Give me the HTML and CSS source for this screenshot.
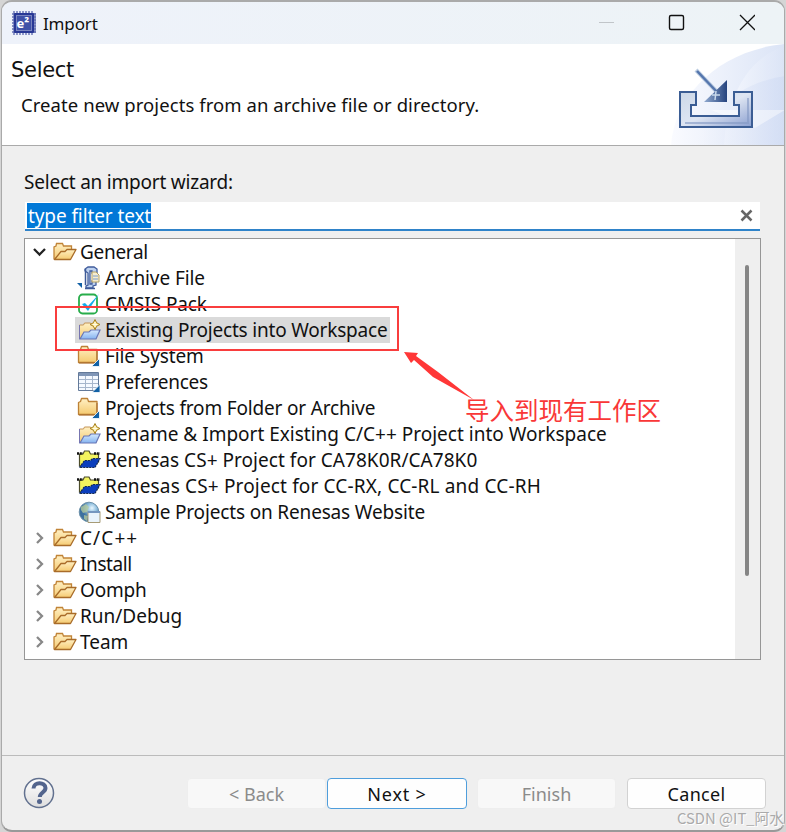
FILE: index.html
```html
<!DOCTYPE html>
<html lang="en">
<head>
<meta charset="utf-8">
<title>Import</title>
<link rel="stylesheet" href="styles.css">
</head>
<body>
<svg class="defs" width="0" height="0" aria-hidden="true">
  <defs>
    <linearGradient id="gold" x2="0" y2="1"><stop stop-color="#fff0c4"/><stop offset="1" stop-color="#f5ca70"/></linearGradient>
    <linearGradient id="sky" x2="0" y2="1"><stop stop-color="#d5e9ff"/><stop offset="1" stop-color="#85b3ef"/></linearGradient>
    <linearGradient id="sweep"><stop stop-color="#fafbff"/><stop offset="1" stop-color="#dbe4f6"/></linearGradient>
    <linearGradient id="sweep2"><stop stop-color="#f5f7fd"/><stop offset="1" stop-color="#cedaf3"/></linearGradient>
    <linearGradient id="tray" x2="1" y2="1"><stop stop-color="#ccd8e8"/><stop offset=".5" stop-color="#dee5f2"/><stop offset="1" stop-color="#8a9fd0"/></linearGradient>
    <linearGradient id="arrow"><stop stop-color="#92abd0"/><stop offset="1" stop-color="#25437e"/></linearGradient>
    <linearGradient id="help" x2="0" y2="1"><stop stop-color="#fff"/><stop offset="1" stop-color="#dedede"/></linearGradient>
    <radialGradient id="globe" cx=".65" cy=".3"><stop stop-color="#e9f7ff"/><stop offset=".5" stop-color="#8fbfdf"/><stop offset="1" stop-color="#3e719f"/></radialGradient>
    <symbol id="open" viewBox="0 0 24 20"><path d="M1 17.500V5l2-1 .5-2.500h6l1 2.500h8v5" fill="url(#gold)" stroke="#c18437" stroke-width="1.300"/><path d="M1.500 17.500 8 9.500h4l2-2h9l-5.500 10z" fill="url(#gold)" stroke="#a96c29" stroke-width="1.300" stroke-linejoin="round"/></symbol>
    <symbol id="closed" viewBox="0 0 24 24"><path d="M1.500 6.500 3.500 5.500l1-3h6l1 3h8.500v13h-18.500z" fill="url(#gold)" stroke="#bd8136" stroke-width="1.300" stroke-linejoin="round"/><path d="M2 19h18V7" fill="none" stroke="#a76b2d"/><path d="M14.500 22.500h8v-8z" fill="#1261a5" stroke="#fff" stroke-width=".8"/></symbol>
    <symbol id="project" viewBox="0 0 24 22"><path d="M2.500 20V6h4l1-2h6l1 2h4v6" fill="url(#gold)" stroke="#c49456"/><path d="M2.500 20V6" stroke="#7775b0"/><path d="m3 20 4-7h5l2-2h9l-4 9z" fill="url(#sky)" stroke="#6876b6" stroke-width="1.200"/><path d="m18 .5 1.700 3.300L23 5.500l-3.300 1.700L18 10.500l-1.700-3.300L13 5.500l3.300-1.700z" fill="#f7df86" stroke="#a88223"/><path d="M18 3v5m-2.500-2.500h5" stroke="#fffde8" stroke-width="1.200"/></symbol>
    <symbol id="cs" viewBox="0 0 24 24"><path d="M2.500 18V6H6l1.500-3H12l1.500 3h8v8z" fill="#f3f35e" stroke="#4c4c2a" stroke-width="1.200"/><path d="M0 5.500h6m11 0h6" stroke="#111" stroke-width="2.500" stroke-dasharray="2 .8"/><path d="m2.500 19.500 5-7h6l2-2H23l-5 9z" fill="#0b3ebc" stroke="#172b50" stroke-width="1.200" stroke-dasharray="2 1"/></symbol>
  </defs>
</svg>
<main class="window">
  <header class="titlebar">
    <svg class="app" viewBox="0 0 26 26"><path d="M3 1v24M6 1v24M9 1v24M12 1v24M15 1v24M18 1v24M21 1v24M24 3v20M1 4h24M1 7h24M1 10h24M1 13h24M1 16h24M1 19h24M1 22h24" stroke="#6470b2" stroke-width="1.400"/><rect x="3" y="3" width="20" height="20" rx="1" fill="#283895"/><rect x="5.500" y="5.500" width="15" height="15" fill="#3f50a7" stroke="#7883be"/><text x="5.500" y="17.500" class="logo">e²</text></svg>
    <h1>Import</h1>
    <svg class="controls" width="170" height="40"><path d="M14 20.500h15" stroke="#c1c5c9"/><rect x="84.500" y="13.500" width="14" height="14" rx="1.500" fill="none" stroke="#111" stroke-width="1.400"/><path d="m155 13 15 15m0-15-15 15" stroke="#111" stroke-width="1.300"/></svg>
  </header>
  <section class="banner">
    <div><h2>Select</h2><p>Create new projects from an archive file or directory.</p></div>
    <svg class="art" viewBox="0 0 116 101"><path d="M2 101C6 49 52 6 116 0v101z" fill="url(#sweep)"/><path d="M55 101C57 70 68 18 116 2v99z" fill="url(#sweep)" opacity=".7"/><path d="M25 101C44 66 69 39 116 32v69z" fill="url(#sweep2)" opacity=".65"/><path d="M42 66h74L86 84z" fill="#fff" opacity=".45"/><path d="M11 48h16v13h-5v11h48V61h-5V48h18v35H11z" fill="url(#tray)" stroke="#3b5d94" stroke-width="2"/><path d="M16 79h63V54" fill="none" stroke="#8298c3" stroke-width="2" opacity=".6"/><path d="m27 26 21 22" stroke="#bccce1" stroke-width="4"/><path d="m28 27 20 21" stroke="#5576ad" stroke-width="2.500"/><path d="M58 36v22H35z" fill="url(#arrow)"/><path d="M43 51h8m-4-4-1 9" stroke="#c8d9ec" stroke-width="1.500"/></svg>
  </section>
  <section class="content">
    <label class="prompt">Select an import wizard:</label>
    <div class="filter"><span>type filter text</span><svg width="13" height="13"><path d="m1.500 1.500 10 10m0-10-10 10" stroke="#666" stroke-width="2.500"/></svg></div>
    <div class="treebox">
      <ul class="tree">
        <li><svg class="chev"><path d="m2 4 5.500 5.500L13 4" stroke="#222"/></svg><svg class="fold"><use href="#open"/></svg><b class="t-general">General</b></li>
        <li class="child"><svg class="ico" viewBox="0 0 24 24"><path d="M8 5V3l3-2h6l3 2v4h-5V5h-2v13h2v-3h4v4l-3 1v2H9v-2l2-1V7z" fill="#bdd1ef" stroke="#405c9c" stroke-width="1.300"/><path d="M8.500 3v16M8 22.500h10" stroke="#3f5b98" stroke-width="1.500"/><path d="M15 6h4l3 3v7h-7z" fill="#f7edcf" stroke="#b5a264"/><path d="M16 10h5m-5 3h5" stroke="#789bcc"/><path d="M0 17h5v5z" fill="#1261a5"/></svg><b class="t-archive">Archive File</b></li>
        <li class="child"><svg class="ico" viewBox="0 0 24 24"><rect x="2" y="2.500" width="18" height="19" rx="3.500" fill="#fff" stroke="#28ad4b" stroke-width="1.800"/><path d="m5 12 3-1 3 3L22 2 11 19z" fill="#12aeee"/></svg><b class="t-cmsis">CMSIS Pack</b></li>
        <li class="child selected"><svg class="ico"><use href="#project"/></svg><b class="t-existing">Existing Projects into Workspace</b></li>
        <li class="child"><svg class="ico"><use href="#closed"/></svg><b class="t-system">File System</b></li>
        <li class="child"><svg class="ico" viewBox="0 0 24 24"><path d="M1.500 2.500h20v18h-20z" fill="#f5f9ff" stroke="#637999"/><path d="M2 3h19v3H2z" fill="#8096b7"/><path d="M2 9.500h19M2 13.500h19M2 17.500h19M8.500 6v14m7-14v14" stroke="#a6b6cc"/><path d="M15 22.500h8v-8z" fill="#1261a5" stroke="#fff" stroke-width=".8"/></svg><b class="t-prefs">Preferences</b></li>
        <li class="child"><svg class="ico"><use href="#closed"/></svg><b class="t-folder">Projects from Folder or Archive</b></li>
        <li class="child"><svg class="ico"><use href="#project"/></svg><b class="t-rename">Rename &amp; Import Existing C/C++ Project into Workspace</b></li>
        <li class="child"><svg class="ico"><use href="#cs"/></svg><b class="t-ca">Renesas CS+ Project for CA78K0R/CA78K0</b></li>
        <li class="child"><svg class="ico"><use href="#cs"/></svg><b class="t-cc">Renesas CS+ Project for CC-RX, CC-RL and CC-RH</b></li>
        <li class="child"><svg class="ico" viewBox="0 0 24 24"><circle cx="12" cy="12" r="9.800" fill="url(#globe)" stroke="#6c91aa"/><path d="m4 7 5-3 3 3-2 5-4 1-2-3m3 5 4 1-1 5-3-2z" fill="#b7cc9c" opacity=".75"/><path d="M11 11.500h12v11H11z" fill="#eaf4fc" stroke="#a79b76"/><path d="M11 12h12" stroke="#7697bf" stroke-width="2"/></svg><b class="t-sample">Sample Projects on Renesas Website</b></li>
        <li><svg class="chev"><path d="m5 2 5 5-5 5" stroke="#888"/></svg><svg class="fold"><use href="#open"/></svg><b class="t-c">C/C++</b></li>
        <li><svg class="chev"><path d="m5 2 5 5-5 5" stroke="#888"/></svg><svg class="fold"><use href="#open"/></svg><b class="t-install">Install</b></li>
        <li><svg class="chev"><path d="m5 2 5 5-5 5" stroke="#888"/></svg><svg class="fold"><use href="#open"/></svg><b class="t-oomph">Oomph</b></li>
        <li><svg class="chev"><path d="m5 2 5 5-5 5" stroke="#888"/></svg><svg class="fold"><use href="#open"/></svg><b class="t-run">Run/Debug</b></li>
        <li><svg class="chev"><path d="m5 2 5 5-5 5" stroke="#888"/></svg><svg class="fold"><use href="#open"/></svg><b class="t-team">Team</b></li>
      </ul>
      <div class="scroll"><i></i></div>
    </div>
  </section>
  <footer>
    <svg class="help" viewBox="0 0 32 32"><circle cx="16" cy="16" r="14.500" fill="url(#help)" stroke="#62718f" stroke-width="1.500"/><path d="M10.500 11.500c0-7 12-7 12-.5 0 4.500-5.700 4.500-5.700 9" fill="none" stroke="#53658d" stroke-width="4"/><circle cx="16.500" cy="24.500" r="2.500" fill="#53658d"/></svg>
    <button class="back" disabled>&lt; Back</button><button class="next">Next &gt;</button><button class="finish" disabled>Finish</button><button class="cancel">Cancel</button>
  </footer>
</main>
<div class="mark"></div>
<svg class="pointer" width="76" height="52"><path d="M0 0 14 1 12 4 34 20 70 48 29 25 10 8 7 11z" fill="#ff3737"/></svg>
<div class="note">导入到现有工作区</div>
<div class="watermark">CSDN @IT_阿水</div>
</body>
</html>
```
FILE: styles.css
```css
*{box-sizing:border-box}
body{margin:0;width:786px;height:832px;overflow:hidden;position:relative;background:#d5d5d5;font:19px/26px "Noto Sans","Noto Sans CJK SC",sans-serif;color:#111}
.defs{position:absolute}
.window{width:784px;height:832px;margin-left:1px;border:1px solid #aaa;border-top-width:2px;border-bottom:2px solid #999;border-radius:11px;overflow:hidden;background:#efefef;display:flex;flex-direction:column}
.titlebar{height:42px;flex:none;background:linear-gradient(90deg,#eef2fa,#edf3f6);display:flex;align-items:center;padding-left:9px}
.app{width:26px;height:26px}
.logo{font:bold 13px "Noto Sans",sans-serif;fill:#fff}
h1{font-size:17px;font-weight:400;margin:1px 0 0 6px;letter-spacing:-.15px}
.controls{margin:-3px 29px 0 auto}
.banner{height:102px;flex:none;background:#fff;border-bottom:1px solid #aaa;display:flex;justify-content:space-between}
.banner>div{padding:12px 0 0 9px}
h2{font:21px/28px "DejaVu Sans",sans-serif;margin:0;white-space:nowrap;letter-spacing:-.3px}
.banner p{margin:8px 0 0 10px;white-space:nowrap;font-size:18.500px;letter-spacing:.07px}
.art{width:116px;height:101px;margin-right:-1px}
.content{height:610px;flex:none;padding:23px 23px 0 22px;border-bottom:1px solid #bbb;display:flex;flex-direction:column}
.prompt{height:33px;letter-spacing:-.22px}
.filter{height:29px;background:#fff;border-bottom:2px solid #2f83c9;display:flex;align-items:center;justify-content:space-between;padding:0 7px 0 2px;margin-left:1px;margin-right:1px}
.filter span{background:#0078d7;color:#fff;height:25px;line-height:26px;letter-spacing:-.1px;padding-left:1px}
.treebox{height:422px;margin-top:7px;border:1px solid #969696;background:#fff;display:flex;justify-content:space-between}
.tree{list-style:none;margin:0;padding:0 0 0 7px;width:660px}
.tree li{height:26px;display:flex;align-items:center;white-space:nowrap}
.tree b{font-weight:400;height:26px}
.chev{width:14px;height:14px;margin-right:7px;fill:none;stroke-width:2.300}
.fold{width:24px;height:20px;margin-right:3px}
.child{padding-left:45px}
.ico{width:24px;height:24px;margin-right:4px;flex:none}
.selected{background:linear-gradient(#dadada,#dadada) 43px 0/315px 26px no-repeat}
.t-general{letter-spacing:-.3px}
.t-archive,.t-cmsis,.t-system{letter-spacing:-.1px}
.t-existing{letter-spacing:-.2px}
.t-prefs{letter-spacing:-.27px}
.t-folder{letter-spacing:-.18px}
.t-ca{letter-spacing:.04px}
.t-cc{letter-spacing:.155px}
.t-sample{letter-spacing:-.16px}
.t-c{letter-spacing:1.100px}
.t-install{letter-spacing:-.4px}
.t-oomph{letter-spacing:-.2px}
.scroll{width:25px;background:#efefef;display:flex;justify-content:center;padding:26px 1px 0 0}
.scroll i{width:4px;height:311px;background:#858585;border-radius:2px}
footer{flex:1;display:flex;padding:22px 17px 0 21px}
.help{width:32px;height:32px;margin:-1px 132px 0 0;flex:none}
button{font:18px/26px "Noto Sans",sans-serif;height:31px;padding:1px 0 0;border:1px solid #d2d2d2;border-radius:4px;background:#fefefe;color:#111;flex:none}
button:disabled{background:#f8f8f8;color:#8b8b8b;border-color:#eee}
.back{width:139px;margin-right:1px}
.next{width:140px;border-color:#4f9edc;margin-right:10px;letter-spacing:.8px}
.finish{width:139px;margin-right:11px}
.cancel{width:139px;letter-spacing:.3px}
.mark{position:absolute;left:55px;top:306px;width:344px;height:45px;border:2px solid #f93d3d}
.pointer{position:absolute;left:404px;top:352px}
.note{position:absolute;left:465px;top:398px;font:24.500px/24px "Noto Sans CJK SC",sans-serif;color:#f93737;white-space:nowrap}
.watermark{position:absolute;left:677px;top:807px;width:109px;font:14.800px/22px "Noto Sans CJK SC",sans-serif;color:#aaa;text-shadow:1px 1px #fff;white-space:nowrap}
```
